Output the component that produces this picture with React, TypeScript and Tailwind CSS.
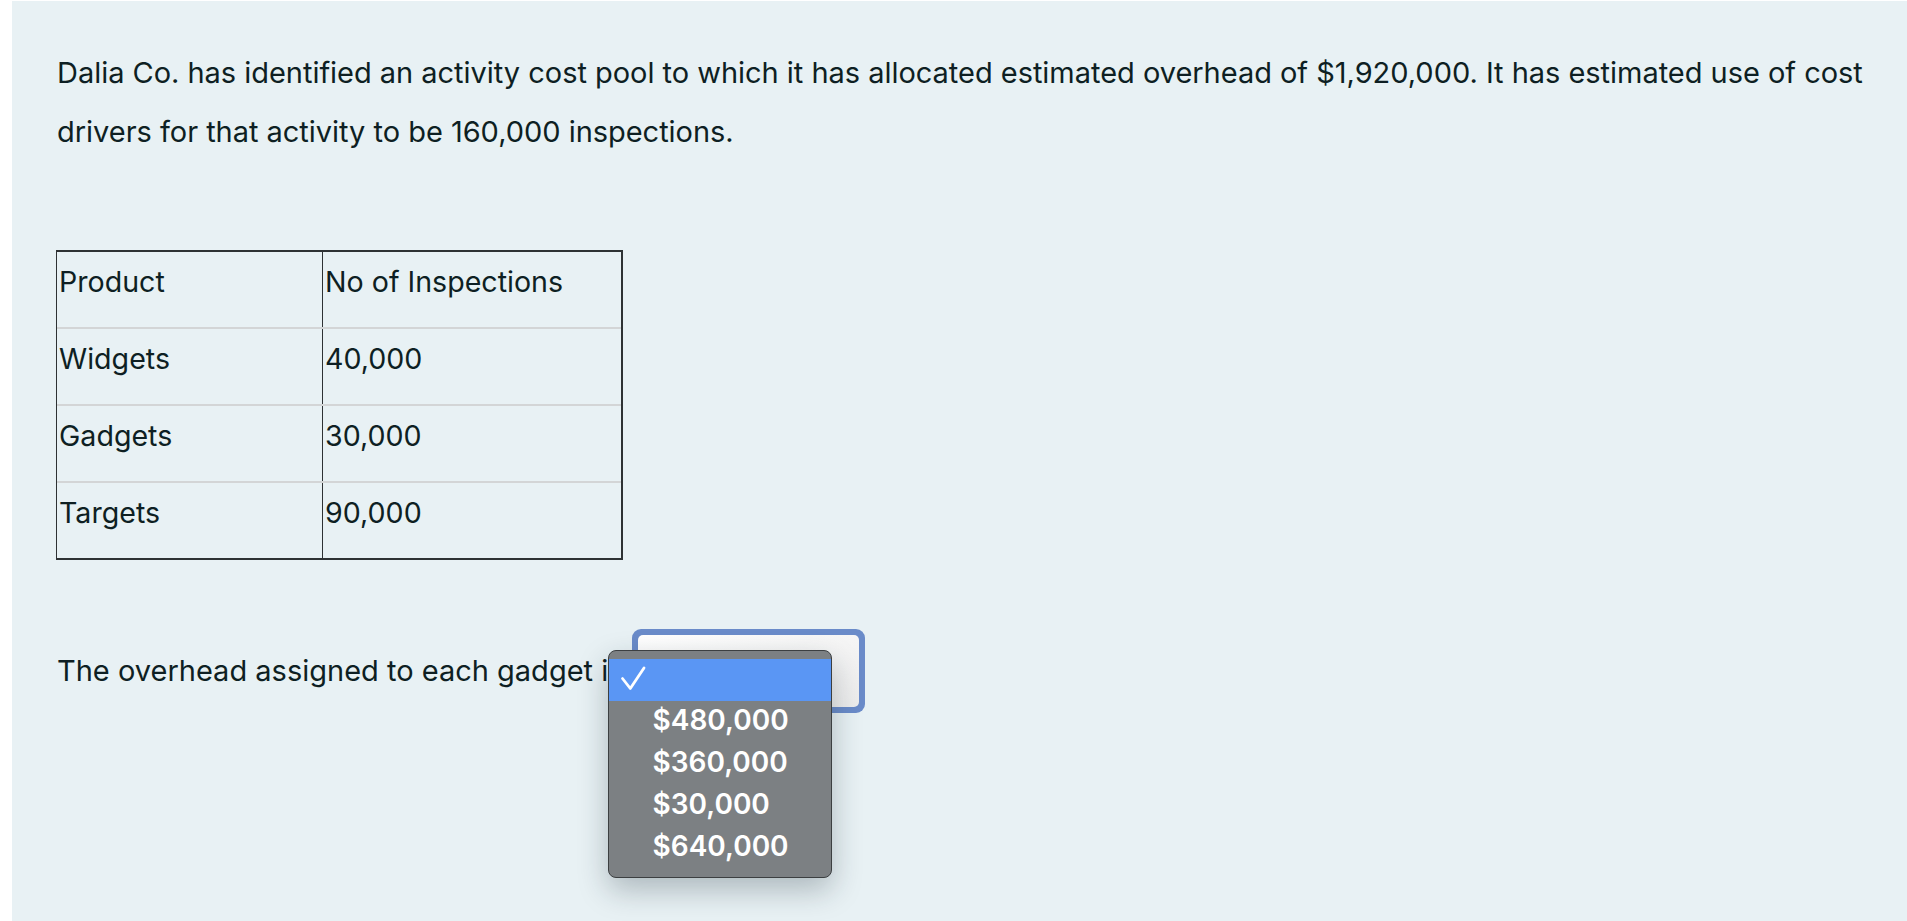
const rows = [
  { product: "Widgets", count: "40,000" },
  { product: "Gadgets", count: "30,000" },
  { product: "Targets", count: "90,000" },
];

const options = ["$480,000", "$360,000", "$30,000", "$640,000"];

function Cell({ children, first }: { children: React.ReactNode; first?: boolean }) {
  return (
    <div
      className={
        "h-[75px] pt-[13px] pl-[2px] leading-[34px] " +
        (first ? "w-[265px]" : "flex-1 border-l border-[#2e3234]")
      }
    >
      {children}
    </div>
  );
}

function Dropdown() {
  return (
    <div className="relative ml-[8px]">
      <div className="rounded-[9px] bg-[#6a8bc9] p-[6px]">
        <div className="h-[72px] w-[221px] rounded-[5px] bg-gradient-to-br from-white to-[#ececec]" />
      </div>

      {/* open option list, drawn over the select */}
      <div
        className="absolute left-[-24px] top-[21px] w-[224px] rounded-[8px] border border-[#3c3f41]
                   bg-[#7c8083] py-[8px] shadow-[0_12px_30px_rgba(20,40,50,0.28)]"
        style={{ fontFamily: "Inter, 'Liberation Sans', sans-serif" }}
      >
        <div className="h-[42px] bg-[#5a96f4]">
          <svg width="44" height="42" viewBox="0 0 44 42" fill="none">
            <path
              d="M13.5 19.5 L21.3 29.5 L35 9"
              stroke="white"
              strokeWidth="2.8"
              strokeLinecap="round"
              strokeLinejoin="round"
            />
          </svg>
        </div>
        {options.map(o => (
          <div
            key={o}
            className="h-[42px] pl-[44px] text-[28px] font-semibold leading-[38px] text-white"
          >
            {o}
          </div>
        ))}
      </div>
    </div>
  );
}

export default function App() {
  return (
    <div className="min-h-screen bg-white pl-[12px] pt-[1px]">
      <div
        className="h-[920px] bg-[#e8f1f4] pl-[45px] pt-[42px] text-[29px] text-[#0e1f23]"
        style={{ fontFamily: "Inter, 'Noto Sans', sans-serif" }}
      >
        <p className="max-w-[1830px] leading-[59px] tracking-[-0.03px]">
          Dalia Co. has identified an activity cost pool to which it has allocated estimated
          overhead of $1,920,000. It has estimated use of cost drivers for that activity to be
          160,000 inspections.
        </p>

        <div className="ml-[-1px] mt-[89px] w-[567px] border-y-2 border-l border-r-2 border-[#2e3234] text-[28.6px]">
          <div className="flex">
            <Cell first>Product</Cell>
            <Cell>No of Inspections</Cell>
          </div>
          {rows.map(r => (
            <div key={r.product} className="flex border-t-2 border-[#d3d5d6]">
              <Cell first>{r.product}</Cell>
              <Cell>{r.count}</Cell>
            </div>
          ))}
        </div>

        <div className="mt-[69px] flex items-center">
          <span>The overhead assigned to each gadget is</span>
          <Dropdown />
        </div>
      </div>
    </div>
  );
}
